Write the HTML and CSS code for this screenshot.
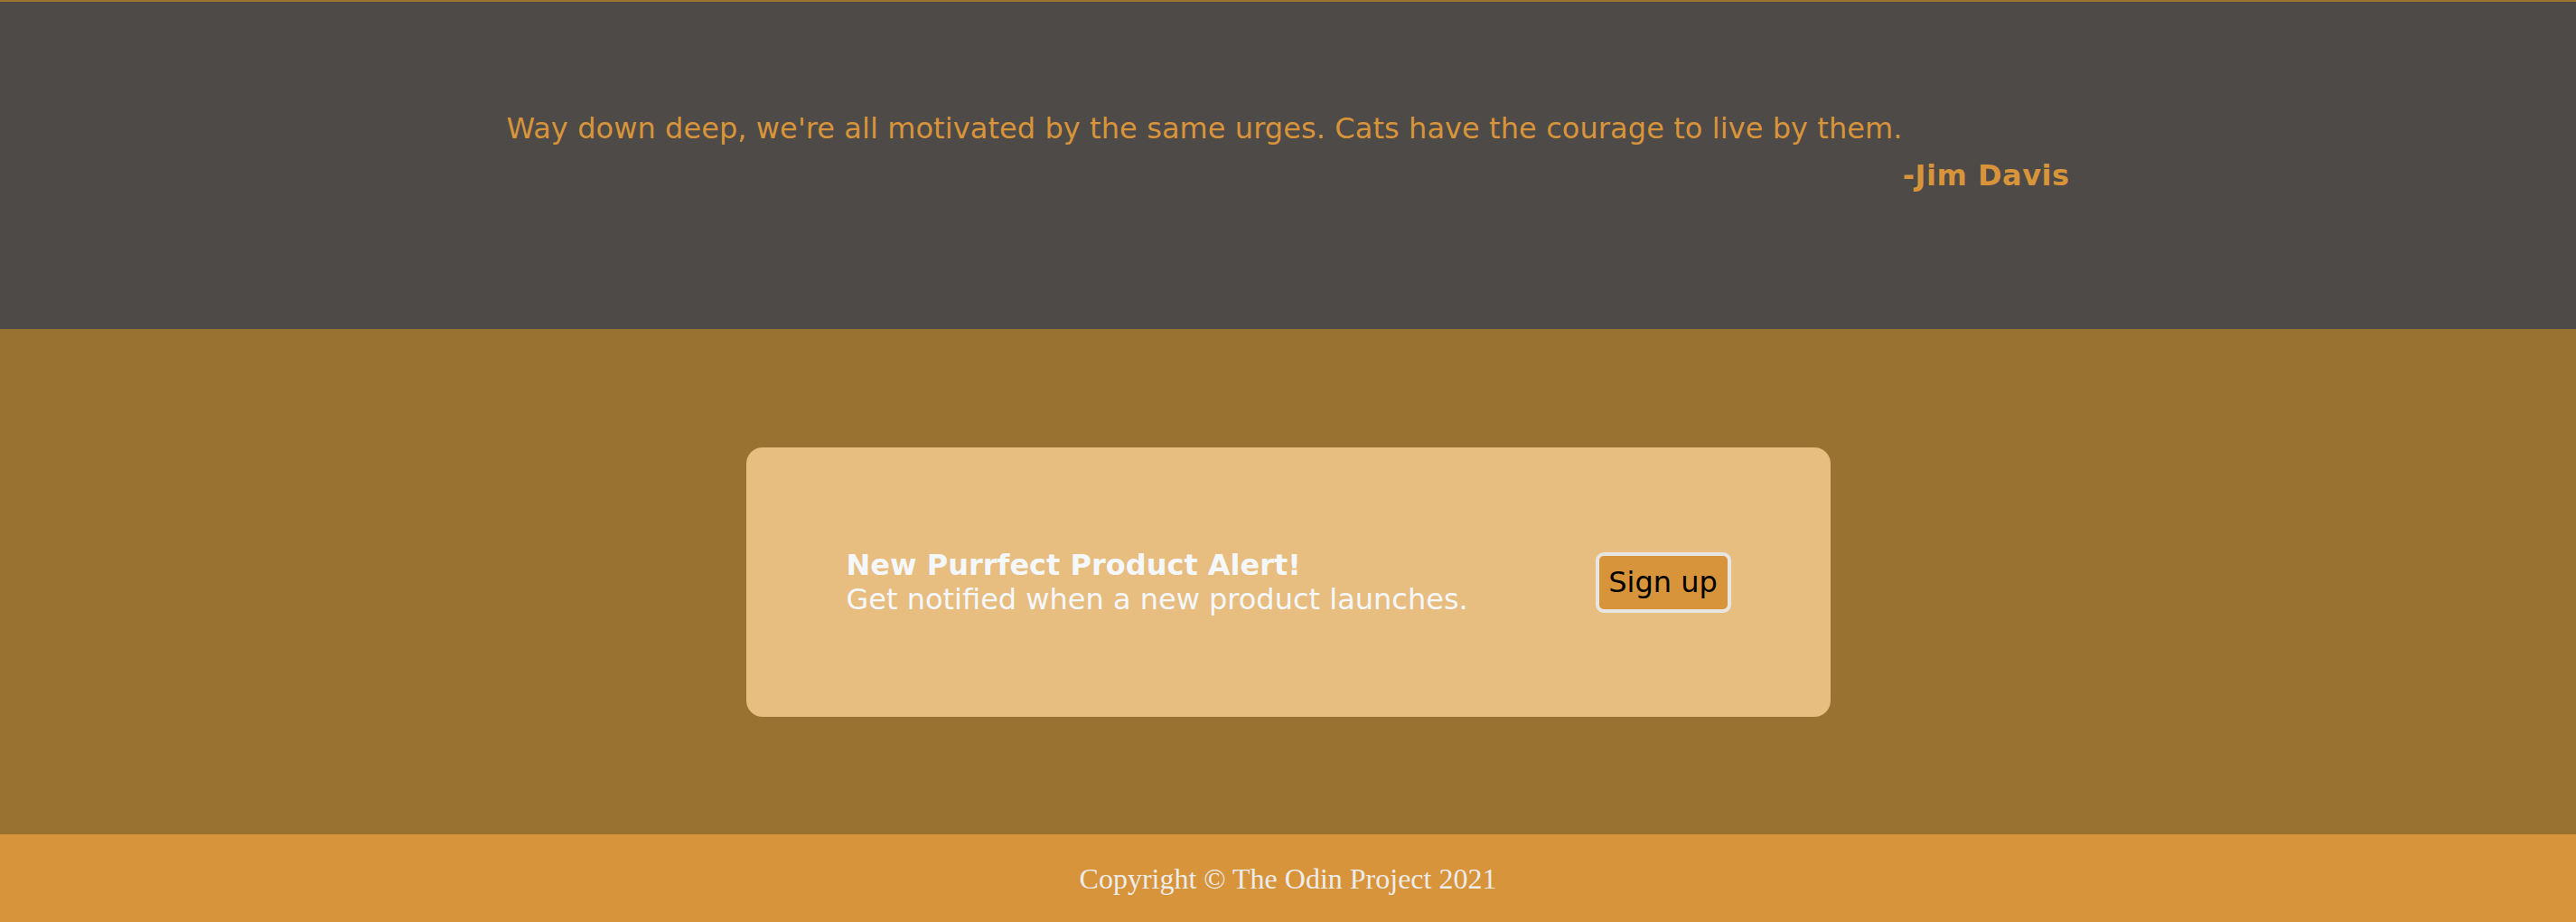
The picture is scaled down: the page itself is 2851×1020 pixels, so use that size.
FILE: index.html
```html
<!DOCTYPE html>
<html lang="en">
<head>
<meta charset="utf-8">
<title>Purrfect</title>
<link rel="stylesheet" href="styles.css">
</head>
<body>
<div class="top-edge"></div>
<section class="quote-section">
  <div class="quote">
    <p class="quote-text">Way down deep, we're all motivated by the same urges. Cats have the courage to live by them.</p>
    <p class="quote-author">-Jim Davis</p>
  </div>
</section>
<section class="cta-section">
  <div class="cta-card">
    <div class="cta-text">
      <p class="cta-title">New Purrfect Product Alert!</p>
      <p class="cta-sub">Get notified when a new product launches.</p>
    </div>
    <button class="cta-button" type="button">Sign up</button>
  </div>
</section>
<footer class="footer">
  <p class="footer-text">Copyright © The Odin Project 2021</p>
</footer>
</body>
</html>
```
FILE: styles.css
```css
* {
  box-sizing: border-box;
}

body {
  margin: 0;
  font-family: "DejaVu Sans", Verdana, sans-serif;
  font-size: 32px;
  line-height: 38px;
}

p {
  margin: 0;
}

.top-edge {
  height: 2px;
  background: #9c7230;
}

.quote-section {
  background: #4e4a47;
  height: 362px;
  padding-top: 121px;
}

.quote {
  width: 1730px;
  margin: 0 auto;
  color: #d8943a;
}

.quote-text {
  letter-spacing: 0.08px;
}

.quote-author {
  margin-top: 14px;
  text-align: right;
  font-weight: bold;
  letter-spacing: 0.5px;
}

.cta-section {
  background: #997130;
  height: 559px;
  padding-top: 131px;
}

.cta-card {
  width: 1200px;
  height: 298px;
  margin: 0 auto;
  padding: 0 110px 0 111px;
  background: #e8bd80;
  border-radius: 18px;
  display: flex;
  align-items: center;
  justify-content: space-between;
  color: #f4f8fd;
}

.cta-title {
  font-weight: bold;
}

.cta-button {
  height: 67px;
  width: 150px;
  padding: 0;
  font-family: "DejaVu Sans", Verdana, sans-serif;
  font-size: 32px;
  line-height: 38px;
  color: #000;
  background: #d8943a;
  border: 4px solid #e8e6e3;
  border-radius: 9px;
}

.footer {
  background: #d8943a;
  height: 97px;
  display: flex;
  align-items: center;
  justify-content: center;
}

.footer-text {
  font-family: "Liberation Serif", "Times New Roman", serif;
  font-size: 32px;
  line-height: 38px;
  color: #ececec;
}
```
